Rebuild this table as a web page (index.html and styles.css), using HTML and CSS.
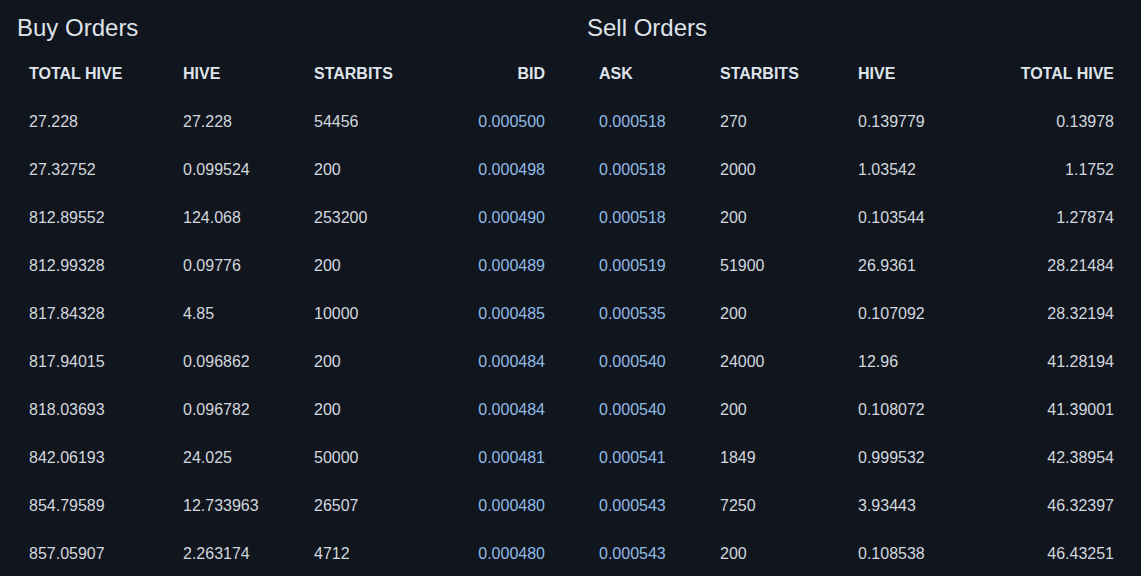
FILE: index.html
```html
<!DOCTYPE html>
<html>
<head>
<meta charset="utf-8">
<link rel="stylesheet" href="styles.css">
</head>
<body>
<div class="books">
  <section class="book">
    <h2 class="title">Buy Orders</h2>
    <table class="orders buy">
      <colgroup><col class="c1"><col class="c2"><col class="c3"><col class="c4"></colgroup>
      <thead><tr><th>TOTAL HIVE</th><th>HIVE</th><th>STARBITS</th><th class="r">BID</th></tr></thead>
      <tbody>
        <tr><td>27.228</td><td>27.228</td><td>54456</td><td class="r price">0.000500</td></tr>
        <tr><td>27.32752</td><td>0.099524</td><td>200</td><td class="r price">0.000498</td></tr>
        <tr><td>812.89552</td><td>124.068</td><td>253200</td><td class="r price">0.000490</td></tr>
        <tr><td>812.99328</td><td>0.09776</td><td>200</td><td class="r price">0.000489</td></tr>
        <tr><td>817.84328</td><td>4.85</td><td>10000</td><td class="r price">0.000485</td></tr>
        <tr><td>817.94015</td><td>0.096862</td><td>200</td><td class="r price">0.000484</td></tr>
        <tr><td>818.03693</td><td>0.096782</td><td>200</td><td class="r price">0.000484</td></tr>
        <tr><td>842.06193</td><td>24.025</td><td>50000</td><td class="r price">0.000481</td></tr>
        <tr><td>854.79589</td><td>12.733963</td><td>26507</td><td class="r price">0.000480</td></tr>
        <tr><td>857.05907</td><td>2.263174</td><td>4712</td><td class="r price">0.000480</td></tr>
      </tbody>
    </table>
  </section>
  <section class="book">
    <h2 class="title">Sell Orders</h2>
    <table class="orders sell">
      <colgroup><col class="c1"><col class="c2"><col class="c3"><col class="c4"></colgroup>
      <thead><tr><th>ASK</th><th>STARBITS</th><th>HIVE</th><th class="r">TOTAL HIVE</th></tr></thead>
      <tbody>
        <tr><td class="price">0.000518</td><td>270</td><td>0.139779</td><td class="r">0.13978</td></tr>
        <tr><td class="price">0.000518</td><td>2000</td><td>1.03542</td><td class="r">1.1752</td></tr>
        <tr><td class="price">0.000518</td><td>200</td><td>0.103544</td><td class="r">1.27874</td></tr>
        <tr><td class="price">0.000519</td><td>51900</td><td>26.9361</td><td class="r">28.21484</td></tr>
        <tr><td class="price">0.000535</td><td>200</td><td>0.107092</td><td class="r">28.32194</td></tr>
        <tr><td class="price">0.000540</td><td>24000</td><td>12.96</td><td class="r">41.28194</td></tr>
        <tr><td class="price">0.000540</td><td>200</td><td>0.108072</td><td class="r">41.39001</td></tr>
        <tr><td class="price">0.000541</td><td>1849</td><td>0.999532</td><td class="r">42.38954</td></tr>
        <tr><td class="price">0.000543</td><td>7250</td><td>3.93443</td><td class="r">46.32397</td></tr>
        <tr><td class="price">0.000543</td><td>200</td><td>0.108538</td><td class="r">46.43251</td></tr>
      </tbody>
    </table>
  </section>
</div>
</body>
</html>
```
FILE: styles.css
```css
html, body {
  margin: 0;
  padding: 0;
  background: #10151e;
}
body {
  font-family: "Liberation Sans", Arial, sans-serif;
  color: #d3d7de;
  overflow: hidden;
}
.books {
  display: grid;
  grid-template-columns: 540px 539px;
  column-gap: 30px;
  padding: 0 15px 0 17px;
}
.title {
  margin: 14px 0 8px;
  font-size: 24px;
  font-weight: 400;
  line-height: 28px;
  color: #dfe3ea;
}
.orders {
  width: 100%;
  border-collapse: collapse;
  table-layout: fixed;
}
.orders th,
.orders td {
  padding: 12px;
  font-size: 16px;
  line-height: 24px;
  text-align: left;
  white-space: nowrap;
}
.orders th {
  font-weight: 700;
  color: #dfe3ea;
}
.orders .r { text-align: right; }
.orders .price { color: #90bbe4; }
.buy .c1 { width: 154px; }
.buy .c2 { width: 131px; }
.buy .c3 { width: 127px; }
.buy .c4 { width: 128px; }
.sell .c1 { width: 121px; }
.sell .c2 { width: 138px; }
.sell .c3 { width: 140px; }
.sell .c4 { width: 140px; }
```
